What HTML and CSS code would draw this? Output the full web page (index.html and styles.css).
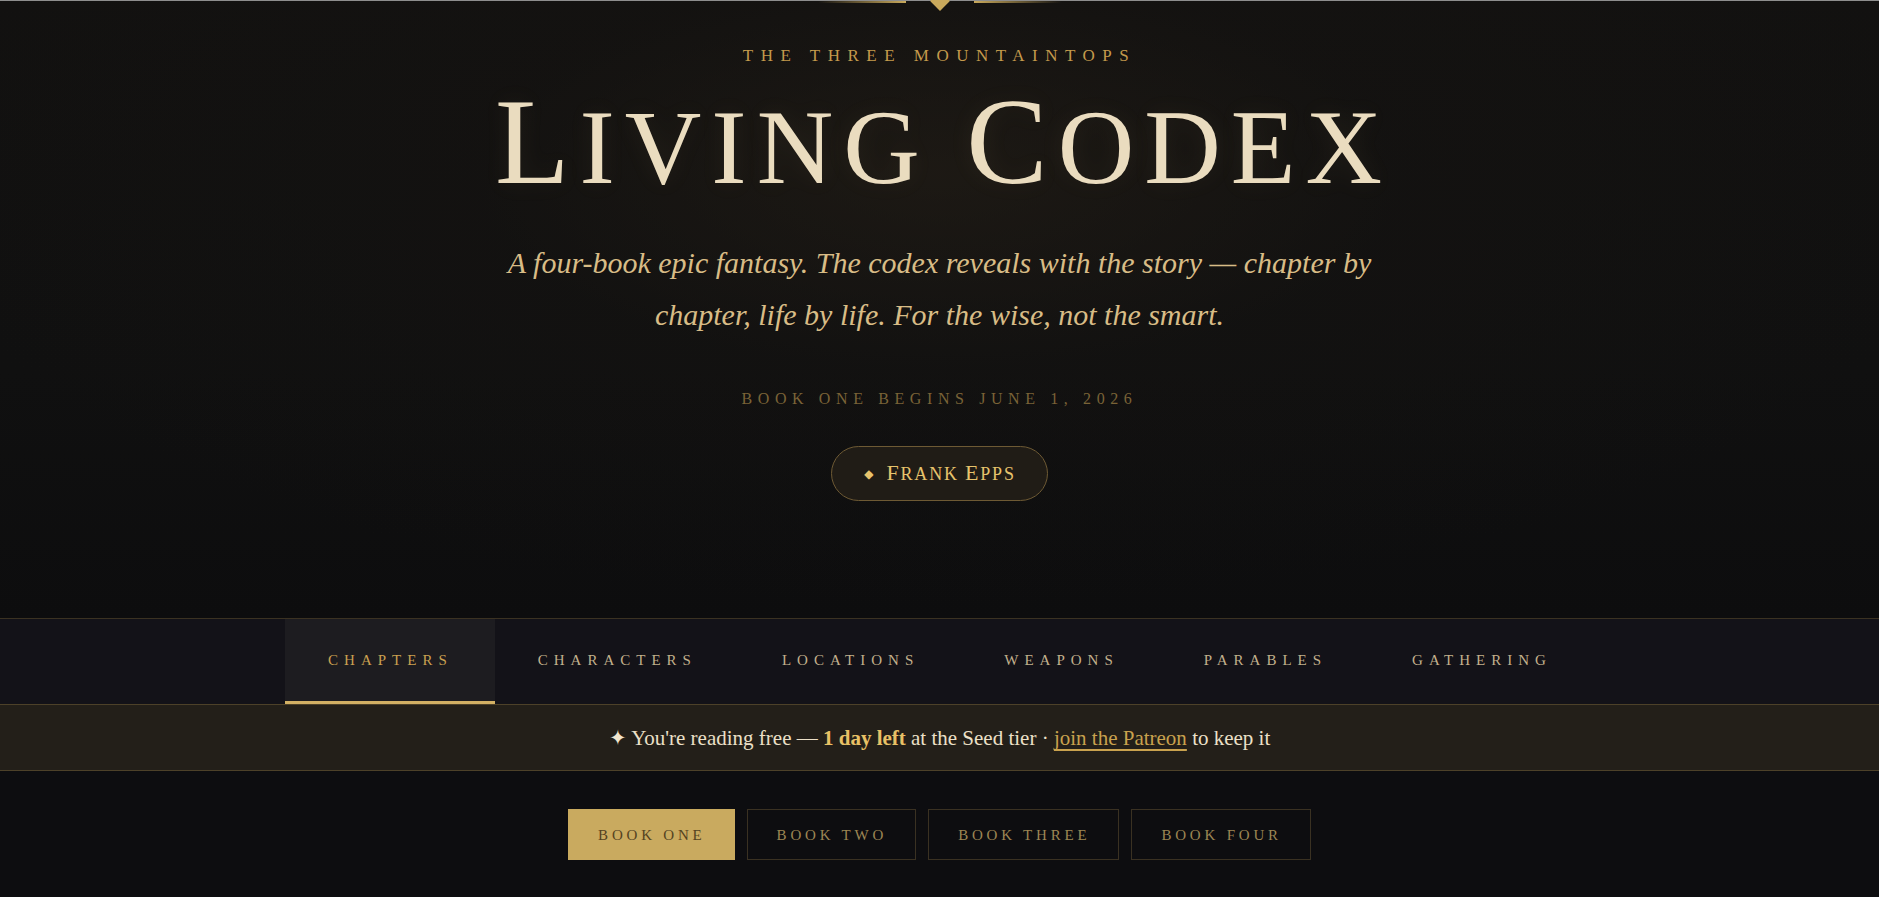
FILE: index.html
```html
<!DOCTYPE html>
<html lang="en">
<head>
<meta charset="utf-8">
<title>Living Codex — The Three Mountaintops</title>
<link rel="stylesheet" href="styles.css">
</head>
<body>
<header class="hero">
  <div class="ornament">
    <span class="rule rule-left"></span>
    <span class="gem"></span>
    <span class="rule rule-right"></span>
  </div>
  <p class="eyebrow">The Three Mountaintops</p>
  <h1 class="title"><span class="initial">L</span>iving <span class="initial">C</span>odex</h1>
  <p class="tagline">A four-book epic fantasy. The codex reveals with the story — chapter by chapter, life by life. For the wise, not the smart.</p>
  <p class="release">Book One Begins June 1, 2026</p>
  <a class="author" href="#"><span class="author-gem">◆</span><span class="author-name"><span class="author-initial">F</span>rank <span class="author-initial">E</span>pps</span></a>
</header>

<nav class="tabs">
  <a class="tab is-active" href="#">Chapters</a>
  <a class="tab" href="#">Characters</a>
  <a class="tab" href="#">Locations</a>
  <a class="tab" href="#">Weapons</a>
  <a class="tab" href="#">Parables</a>
  <a class="tab" href="#">Gathering</a>
</nav>

<div class="notice">
  <p class="notice-text"><span class="notice-star">✦</span> You're reading free — <strong class="notice-strong">1 day left</strong> at the Seed tier · <a class="notice-link" href="#">join the Patreon</a> to keep it</p>
</div>

<section class="books">
  <button class="book is-active" type="button">Book One</button>
  <button class="book" type="button">Book Two</button>
  <button class="book" type="button">Book Three</button>
  <button class="book" type="button">Book Four</button>
</section>
</body>
</html>
```

FILE: styles.css
```css
* {
  box-sizing: border-box;
}

html,
body {
  margin: 0;
  padding: 0;
  background: #0d0d10;
}

body {
  font-family: "Liberation Serif", "DejaVu Serif", serif;
  color: #ece0c8;
  min-height: 897px;
}

p {
  margin: 0;
}

/* ---------- hero ---------- */

.hero {
  position: relative;
  border-top: 1px solid #8e8e8e;
  padding: 45px 0 117px;
  display: flex;
  flex-direction: column;
  align-items: center;
  text-align: center;
  background:
    radial-gradient(ellipse 55% 70% at 50% 28%, rgba(40, 33, 24, 0.5) 0%, rgba(24, 21, 18, 0.28) 45%, rgba(0, 0, 0, 0) 100%),
    linear-gradient(180deg, #121110 0%, #101010 60%, #0d0d0e 100%);
}

.ornament {
  position: absolute;
  top: 0;
  left: 50%;
  transform: translateX(-50%);
  display: flex;
  align-items: flex-start;
  gap: 27px;
}

.rule {
  display: block;
  width: 88px;
  height: 2px;
}

.rule-left {
  background: linear-gradient(90deg, rgba(201, 169, 92, 0) 0%, #c9a95c 100%);
}

.rule-right {
  background: linear-gradient(90deg, #c9a95c 0%, rgba(201, 169, 92, 0) 100%);
}

.gem {
  display: block;
  width: 14px;
  height: 14px;
  margin-top: -7px;
  background: #c9a95c;
  transform: rotate(45deg);
}

.eyebrow {
  font-size: 17px;
  line-height: 20px;
  letter-spacing: 7.5px;
  text-transform: uppercase;
  color: #c49a4c;
}

.title {
  margin: 11px 0 0;
  font-weight: 400;
  font-size: 106px;
  line-height: 130px;
  letter-spacing: 10px;
  padding-left: 8px;
  text-transform: uppercase;
  color: #eadcbf;
  text-shadow: 0 0 24px rgba(234, 200, 140, 0.08);
}

.initial {
  font-size: 122px;
}

.tagline {
  margin-top: 24px;
  max-width: 900px;
  font-style: italic;
  font-size: 30px;
  line-height: 52px;
  color: #d8bc86;
}

.release {
  margin-top: 48px;
  font-size: 16px;
  line-height: 20px;
  letter-spacing: 5.6px;
  text-transform: uppercase;
  color: #7a6337;
}

.author {
  margin-top: 37px;
  display: inline-flex;
  align-items: center;
  gap: 13px;
  height: 55px;
  padding: 0 31px 0 32px;
  border: 1px solid #6e5a34;
  border-radius: 28px;
  background: #201c16;
  color: #e7c36c;
  text-decoration: none;
}

.author-gem {
  font-size: 12px;
  line-height: 1;
  color: #e7c36c;
}

.author-name {
  font-size: 18px;
  line-height: 24px;
  letter-spacing: 1.8px;
  text-transform: uppercase;
}

.author-initial {
  font-size: 22px;
}

/* ---------- section tabs ---------- */

.tabs {
  display: flex;
  justify-content: center;
  background: #131218;
  border-top: 1px solid #3b3222;
}

.tab {
  display: block;
  padding: 31px 42px 31px 43px;
  border-bottom: 3px solid transparent;
  font-size: 15px;
  line-height: 20px;
  letter-spacing: 6px;
  text-transform: uppercase;
  text-decoration: none;
  color: #c2b08c;
}

.tab.is-active {
  background: #1d1c20;
  border-bottom-color: #d2b064;
  color: #caa050;
}

/* ---------- patreon notice ---------- */

.notice {
  background: #231f19;
  border-top: 1px solid #4d4129;
  border-bottom: 1px solid #4d4129;
  padding: 20px 0 19px;
  text-align: center;
}

.notice-text {
  font-size: 21px;
  line-height: 26px;
  color: #ece0c8;
}

.notice-star {
  color: #f1e6cf;
}

.notice-strong {
  color: #e8c166;
}

.notice-link {
  color: #c9a24e;
  text-decoration: underline;
  text-decoration-color: #c9a24e;
  text-underline-offset: 4px;
  text-decoration-thickness: 2px;
}

/* ---------- book switcher ---------- */

.books {
  display: flex;
  justify-content: center;
  gap: 12px;
  padding: 38px 0 37px;
}

.book {
  height: 51px;
  padding: 0 28px 0 29px;
  border: 1px solid #3a3122;
  background: transparent;
  font-family: "Liberation Serif", "DejaVu Serif", serif;
  font-size: 15px;
  line-height: 20px;
  letter-spacing: 3.8px;
  text-transform: uppercase;
  color: #9d8654;
  cursor: pointer;
}

.book.is-active {
  background: #c9aa5f;
  border-color: #c9aa5f;
  color: #54421f;
}
```
